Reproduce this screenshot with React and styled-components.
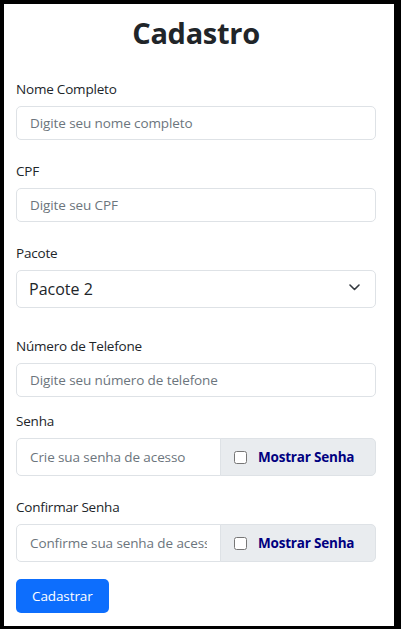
import React from 'react'
import styled, { createGlobalStyle } from 'styled-components'

const GlobalStyle = createGlobalStyle`
  html, body {
    margin: 0;
    padding: 0;
    background: #000;
  }
  * {
    box-sizing: border-box;
  }
`

const Frame = styled.main`
  width: 390px;
  height: 622px;
  margin: 4px 0 0 4px;
  padding: 11px 18px 0 12px;
  background: #fff;
  font-family: 'Open Sans', 'Noto Sans', sans-serif;
  color: #212529;
`

const Title = styled.h1`
  margin: 0 0 28px;
  font-size: 29px;
  line-height: 36px;
  font-weight: 700;
  letter-spacing: -0.3px;
  text-align: center;
  color: #212529;
`

const Field = styled.div`
  display: flex;
  flex-direction: column;
  margin-bottom: ${(p) => p.$mb}px;
`

const Label = styled.label`
  display: block;
  font-size: 13.5px;
  letter-spacing: -0.2px;
  line-height: 20px;
  margin-bottom: 7px;
`

const TextInput = styled.input`
  width: 100%;
  height: 34px;
  padding: 0 13px;
  border: 1px solid #dee2e6;
  border-radius: 5px;
  font-family: inherit;
  font-size: 13.5px;
  letter-spacing: -0.1px;
  color: #212529;
  background: #fff;
  outline: none;

  &::placeholder {
    color: #6c757d;
  }
`

const SelectWrap = styled.div`
  position: relative;
`

const Select = styled.select`
  width: 100%;
  height: 38px;
  padding: 0 36px 0 12px;
  border: 1px solid #dee2e6;
  border-radius: 5px;
  appearance: none;
  background: #fff;
  font-family: inherit;
  font-size: 16px;
  color: #212529;
  outline: none;
`

const Chevron = styled.svg`
  position: absolute;
  right: 16px;
  top: 14px;
  pointer-events: none;
`

const Group = styled.div`
  display: flex;
  height: 38px;
`

const GroupInput = styled(TextInput)`
  flex: 1;
  min-width: 0;
  height: 38px;
  border-radius: 5px 0 0 5px;
`

const Addon = styled.label`
  flex: 0 0 156px;
  display: flex;
  align-items: center;
  gap: 11px;
  padding-left: 13px;
  margin-left: -1px;
  background: #e9ecef;
  border: 1px solid #dee2e6;
  border-radius: 0 5px 5px 0;
  font-size: 13.5px;
  letter-spacing: -0.2px;
  font-weight: 700;
  color: #000080;
  white-space: nowrap;
`

const Check = styled.input`
  width: 13px;
  height: 13px;
  margin: 0;
`

const Button = styled.button`
  height: 34px;
  padding: 0 16px;
  border: none;
  border-radius: 5px;
  background: #0d6efd;
  color: #fff;
  font-family: inherit;
  font-size: 13.5px;
  letter-spacing: -0.1px;
`

export default function App() {
  return (
    <>
      <GlobalStyle />
      <Frame>
        <Title>Cadastro</Title>
        <Field $mb={21}>
          <Label>Nome Completo</Label>
          <TextInput placeholder="Digite seu nome completo" />
        </Field>
        <Field $mb={21}>
          <Label>CPF</Label>
          <TextInput placeholder="Digite seu CPF" />
        </Field>
        <Field $mb={28}>
          <Label>Pacote</Label>
          <SelectWrap>
            <Select defaultValue="2">
              <option value="1">Pacote 1</option>
              <option value="2">Pacote 2</option>
              <option value="3">Pacote 3</option>
            </Select>
            <Chevron width="11" height="7" viewBox="0 0 11 7">
              <path d="M1 1l4.5 4.5L10 1" fill="none" stroke="#343a40" strokeWidth="1.6" strokeLinecap="round" strokeLinejoin="round" />
            </Chevron>
          </SelectWrap>
        </Field>
        <Field $mb={14}>
          <Label>Número de Telefone</Label>
          <TextInput placeholder="Digite seu número de telefone" />
        </Field>
        <Field $mb={21}>
          <Label>Senha</Label>
          <Group>
            <GroupInput type="password" placeholder="Crie sua senha de acesso" />
            <Addon>
              <Check type="checkbox" />
              Mostrar Senha
            </Addon>
          </Group>
        </Field>
        <Field $mb={17}>
          <Label>Confirmar Senha</Label>
          <Group>
            <GroupInput type="password" placeholder="Confirme sua senha de acesso" />
            <Addon>
              <Check type="checkbox" />
              Mostrar Senha
            </Addon>
          </Group>
        </Field>
        <Button>Cadastrar</Button>
      </Frame>
    </>
  )
}
